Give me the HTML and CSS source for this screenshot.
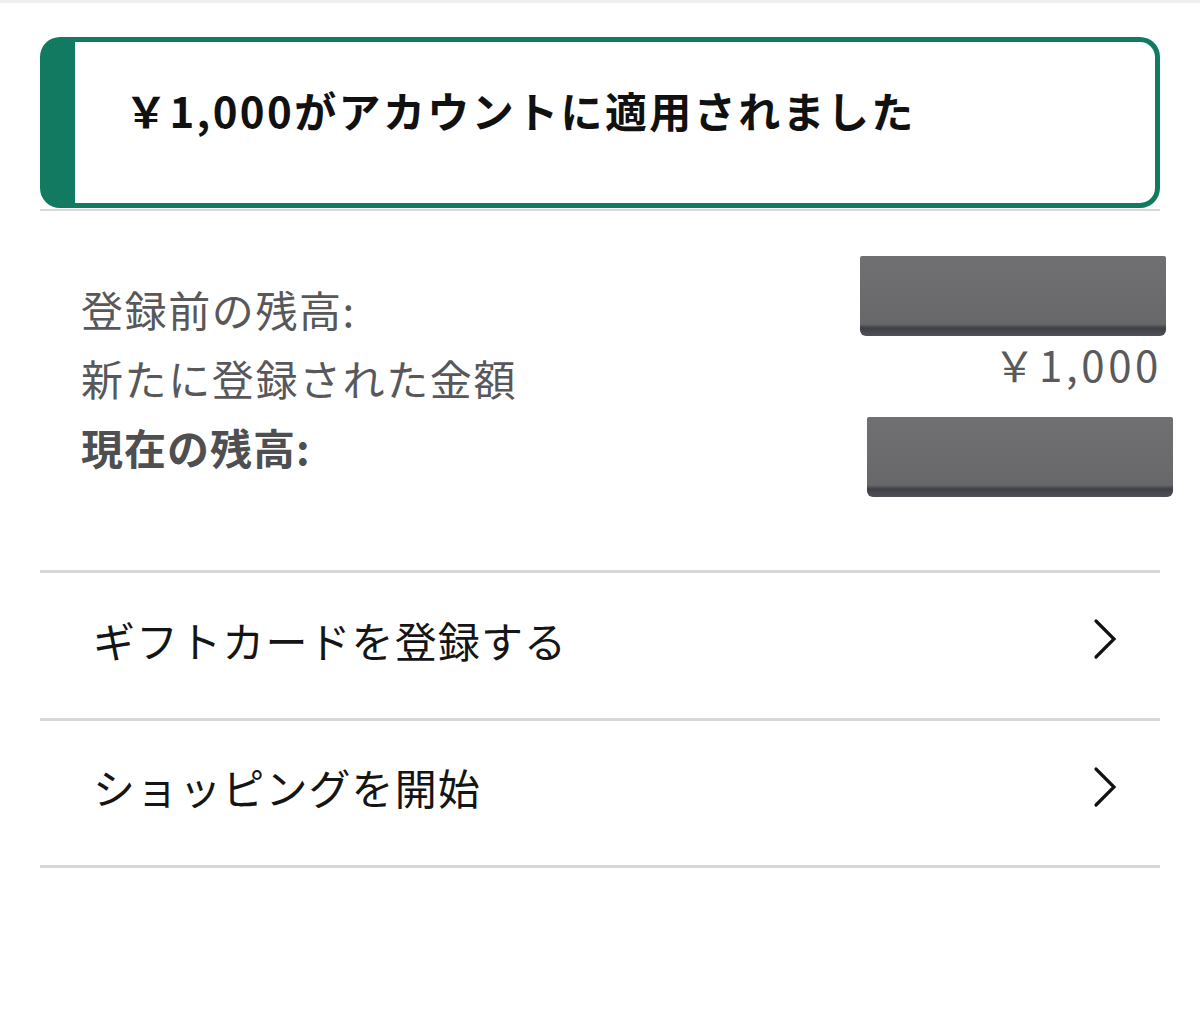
FILE: index.html
```html
<!DOCTYPE html>
<html lang="ja">
<head>
<meta charset="utf-8">
<link rel="stylesheet" href="styles.css">
</head>
<body>
<div class="topbar"></div>
<main class="page">
  <div class="alert">
    <h1 class="alert-title">￥1,000がアカウントに適用されました</h1>
  </div>
  <div class="sep"></div>
  <section class="balance">
    <div class="labels">
      <div class="label">登録前の残高:</div>
      <div class="label">新たに登録された金額</div>
      <div class="label strong">現在の残高:</div>
    </div>
    <div class="values">
      <div class="redact redact-1"></div>
      <div class="amount">￥1,000</div>
      <div class="redact redact-2"></div>
    </div>
  </section>
  <ul class="menu">
    <li class="menu-item">
      <span class="menu-text">ギフトカードを登録する</span>
      <svg class="chev" width="24" height="42" viewBox="0 0 24 42"><path d="M3 3 L21 21 L3 39" fill="none" stroke="#111" stroke-width="3.2" stroke-linecap="round" stroke-linejoin="miter"/></svg>
    </li>
    <li class="menu-item">
      <span class="menu-text">ショッピングを開始</span>
      <svg class="chev" width="24" height="42" viewBox="0 0 24 42"><path d="M3 3 L21 21 L3 39" fill="none" stroke="#111" stroke-width="3.2" stroke-linecap="round" stroke-linejoin="miter"/></svg>
    </li>
  </ul>
</main>
</body>
</html>
```

FILE: styles.css
```css
html, body {
  margin: 0;
  padding: 0;
  background: #ffffff;
}
body {
  font-family: "Noto Sans CJK JP", "Noto Sans", sans-serif;
  color: #111;
}
.topbar {
  height: 3px;
  background: #efeff1;
}
.page {
  padding: 0 40px;
}
.alert {
  margin-top: 34px;
  height: 171px;
  box-sizing: border-box;
  border: 5px solid #137a62;
  border-left-width: 35px;
  border-radius: 20px;
  padding: 46px 0 0 50px;
}
.alert-title {
  margin: 0;
  font-size: 42px;
  line-height: 43px;
  font-weight: 700;
  color: #111;
  letter-spacing: 2.4px;
}
.sep {
  margin-top: 1px;
  height: 2px;
  background: #d9d9dc;
}
.balance {
  display: flex;
  justify-content: space-between;
  height: 359px;
  box-sizing: border-box;
}
.labels {
  padding-top: 63px;
  padding-left: 41px;
}
.label {
  font-size: 42px;
  line-height: 69px;
  color: #58585a;
  letter-spacing: 1.6px;
}
.label.strong {
  font-weight: 700;
  color: #4f4f51;
  letter-spacing: 1px;
}
.values {
  display: flex;
  flex-direction: column;
  align-items: flex-end;
  padding-top: 45px;
}
.redact {
  width: 306px;
  height: 80px;
  background: linear-gradient(180deg, #707073 0%, #68686b 85%, #3f3f48 90%, #505058 100%);
  border-radius: 2px 2px 6px 6px;
}
.redact-1 {
  margin-right: -6px;
}
.redact-2 {
  margin-right: -13px;
  margin-top: 32px;
}
.amount {
  margin-top: 6px;
  font-size: 42px;
  line-height: 43px;
  color: #5a5a5c;
  letter-spacing: 3.6px;
  margin-right: -2px;
}
.menu {
  list-style: none;
  margin: 0;
  padding: 0;
  border-top: 3px solid #d8d8db;
}
.menu-item {
  display: flex;
  align-items: center;
  justify-content: space-between;
  height: 147.5px;
  box-sizing: border-box;
  border-bottom: 3px solid #d8d8db;
  padding: 0 43px 12px 53px;
}
.menu-text {
  font-size: 42px;
  line-height: 43px;
  color: #151515;
  letter-spacing: 1.1px;
}
.chev {
  display: block;
}
```
